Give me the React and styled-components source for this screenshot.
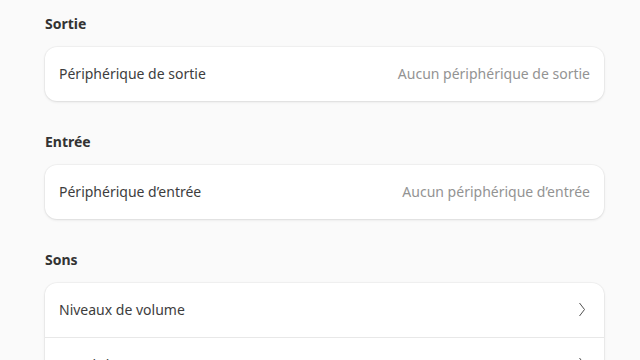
import React from 'react';
import styled, { createGlobalStyle } from 'styled-components';

const GlobalStyle = createGlobalStyle`
  html, body {
    margin: 0;
    padding: 0;
    background: #fafafa;
    font-family: "Noto Sans", "Open Sans", sans-serif;
    -webkit-font-smoothing: antialiased;
  }
`;

const Page = styled.div`
  width: 640px;
  height: 360px;
  overflow: hidden;
  box-sizing: border-box;
  padding: 14px 36px 0 45px;
  display: flex;
  flex-direction: column;
  gap: 31px;
`;

const Section = styled.section`
  display: flex;
  flex-direction: column;
  gap: 13px;
`;

const Heading = styled.h2`
  margin: 0;
  height: 20px;
  line-height: 20px;
  font-size: 14px;
  font-weight: 700;
  color: #333333;
`;

const Card = styled.div`
  background: #ffffff;
  border-radius: 12px;
  box-shadow: 0 0 0 1px rgba(0, 0, 0, 0.03), 0 1px 3px rgba(0, 0, 0, 0.1);
  overflow: hidden;
`;

const Row = styled.div`
  height: 54px;
  box-sizing: border-box;
  padding: 0 16px 1px 14px;
  display: flex;
  align-items: center;
  justify-content: space-between;
  border-top: ${props => (props.first ? 'none' : '1px solid #e8e8e8')};
`;

const Label = styled.span`
  font-size: 14px;
  color: #3d3d3d;
`;

const Value = styled.span`
  font-size: 14px;
  color: #939393;
  margin-right: -2px;
`;

const Chevron = () => (
  <svg width="8" height="15" viewBox="0 0 8 15" style={{ marginRight: 2 }}>
    <path d="M1.5 1 L6.5 7.5 L1.5 14" fill="none" stroke="#505050" strokeWidth="1" />
  </svg>
);

export default function App() {
  return (
    <>
      <GlobalStyle />
      <Page>
        <Section>
          <Heading>Sortie</Heading>
          <Card>
            <Row first>
              <Label>Périphérique de sortie</Label>
              <Value>Aucun périphérique de sortie</Value>
            </Row>
          </Card>
        </Section>
        <Section>
          <Heading>Entrée</Heading>
          <Card>
            <Row first>
              <Label>Périphérique d’entrée</Label>
              <Value>Aucun périphérique d’entrée</Value>
            </Row>
          </Card>
        </Section>
        <Section>
          <Heading>Sons</Heading>
          <Card>
            <Row first>
              <Label>Niveaux de volume</Label>
              <Chevron />
            </Row>
            <Row>
              <Label>Son d’alerte</Label>
              <Chevron />
            </Row>
          </Card>
        </Section>
      </Page>
    </>
  );
}
